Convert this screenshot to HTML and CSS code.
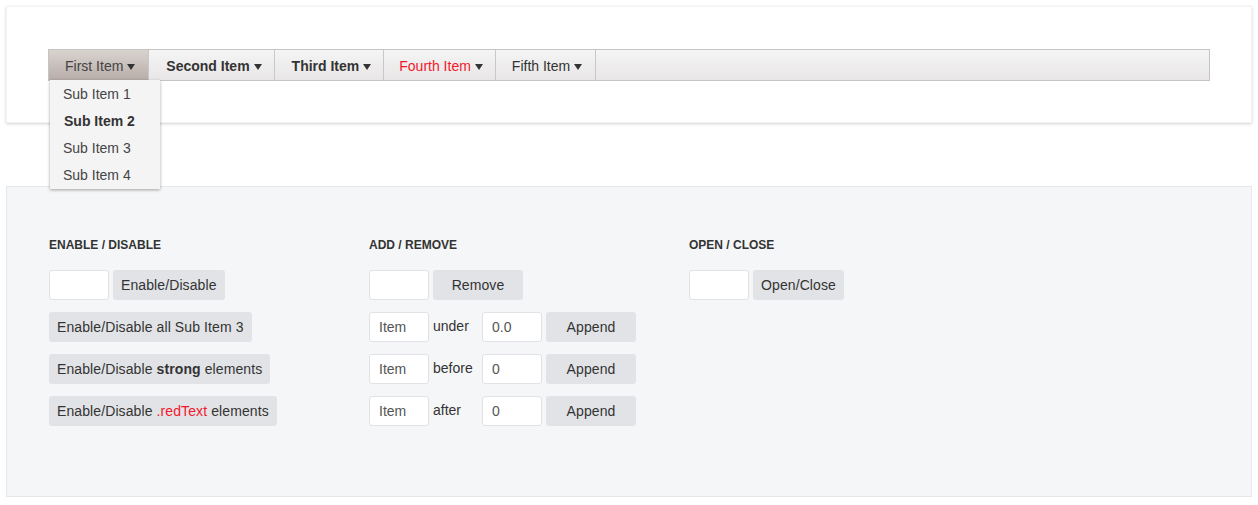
FILE: index.html
```html
<!DOCTYPE html>
<html>
<head>
<meta charset="utf-8">
<link rel="stylesheet" href="styles.css">
</head>
<body>
<div class="card">
  <ul class="menu">
    <li class="item active">First Item<span class="caret"></span>
      <ul class="drop">
        <li>Sub Item 1</li>
        <li class="bold">Sub Item 2</li>
        <li>Sub Item 3</li>
        <li>Sub Item 4</li>
      </ul>
    </li>
    <li class="item bold">Second Item<span class="caret"></span></li>
    <li class="item bold">Third Item<span class="caret"></span></li>
    <li class="item red">Fourth Item<span class="caret"></span></li>
    <li class="item">Fifth Item<span class="caret"></span></li>
  </ul>
</div>
<div class="panel">
  <div class="col">
    <h3>Enable / Disable</h3>
    <div class="row"><input class="field" type="text"><button class="btn">Enable/Disable</button></div>
    <div class="row"><button class="btn">Enable/Disable all Sub Item 3</button></div>
    <div class="row"><button class="btn">Enable/Disable <strong>strong</strong> elements</button></div>
    <div class="row"><button class="btn">Enable/Disable <span class="redtext">.redText</span> elements</button></div>
  </div>
  <div class="col">
    <h3>Add / Remove</h3>
    <div class="row"><input class="field" type="text"><button class="btn wide">Remove</button></div>
    <div class="row"><input class="field" type="text" value="Item"><span class="lbl">under</span><input class="field" type="text" value="0.0"><button class="btn wide">Append</button></div>
    <div class="row"><input class="field" type="text" value="Item"><span class="lbl">before</span><input class="field" type="text" value="0"><button class="btn wide">Append</button></div>
    <div class="row"><input class="field" type="text" value="Item"><span class="lbl">after</span><input class="field" type="text" value="0"><button class="btn wide">Append</button></div>
  </div>
  <div class="col">
    <h3>Open / Close</h3>
    <div class="row"><input class="field" type="text"><button class="btn">Open/Close</button></div>
  </div>
</div>
</body>
</html>
```
FILE: styles.css
```css
html, body {
  margin: 0;
  padding: 0;
  background: #ffffff;
}
body {
  padding: 6px 6px 0 6px;
  font-family: "Liberation Sans", Arial, sans-serif;
  font-size: 14px;
  color: #333;
}
.card {
  background: #fff;
  border: 1px solid #f2f2f2;
  box-shadow: 0 1px 3px rgba(0, 0, 0, 0.18);
  padding: 42px 41px 0 41px;
  box-sizing: border-box;
  height: 117px;
}
.menu {
  list-style: none;
  margin: 0;
  padding: 0;
  display: flex;
  height: 32px;
  box-sizing: border-box;
  border: 1px solid #c4c4c4;
  background: linear-gradient(#f5f5f5, #e8e6e6);
}
.item {
  position: relative;
  display: flex;
  align-items: center;
  padding: 2px 12px 0 16px;
  border-right: 1px solid #c8c8c8;
  color: #333;
  line-height: 28px;
}
.item.bold { font-weight: bold; padding: 2px 12px 0 17px; }
.item.red { color: #f2182c; padding: 2px 12px 0 15px; }
.item:last-child { padding-right: 13px; }
.item.active {
  background: linear-gradient(#d9d3cf, #b8ada8);
  color: #444;
  padding-right: 13px;
}
.caret {
  display: inline-block;
  width: 0;
  height: 0;
  margin-left: 4px;
  margin-top: 1px;
  border-left: 4px solid transparent;
  border-right: 4px solid transparent;
  border-top: 6px solid #333;
}
.drop {
  position: absolute;
  left: 1px;
  top: 30px;
  width: 110px;
  margin: 0;
  padding: 1px 0 0 0;
  list-style: none;
  background: #f4f4f4;
  box-shadow: 0 1px 3px rgba(0, 0, 0, 0.35);
  z-index: 5;
}
.drop li {
  height: 27px;
  line-height: 27px;
  padding-left: 13px;
  color: #444;
  font-weight: normal;
}
.drop li.bold { font-weight: bold; color: #333; padding-left: 14px; }
.panel {
  margin-top: 63px;
  background: #f5f6f8;
  border: 1px solid #e6e7ea;
  padding: 51px 42px 58px 42px;
  display: flex;
}
.col {
  width: 320px;
}
.col h3 {
  margin: 0 0 17px 0;
  font-size: 12px;
  line-height: 15px;
  font-weight: bold;
  text-transform: uppercase;
  color: #333;
}
.row {
  display: flex;
  align-items: center;
  gap: 4px;
  height: 30px;
  margin-bottom: 12px;
}
.field {
  width: 60px;
  height: 30px;
  box-sizing: border-box;
  border: 1px solid #e1e2e6;
  border-radius: 3px;
  background: #fff;
  padding: 0 9px;
  font-family: "Liberation Sans", Arial, sans-serif;
  font-size: 14px;
  color: #555;
  outline: none;
}
.btn {
  height: 30px;
  border: none;
  border-radius: 3px;
  background: #e2e3e6;
  padding: 0 8px;
  font-family: "Liberation Sans", Arial, sans-serif;
  font-size: 14px;
  letter-spacing: 0.1px;
  color: #333;
  cursor: pointer;
}
.btn.wide { width: 90px; }
.lbl {
  width: 45px;
  margin-top: -2px;
  color: #333;
}
.redtext { color: #f2182c; }
```
